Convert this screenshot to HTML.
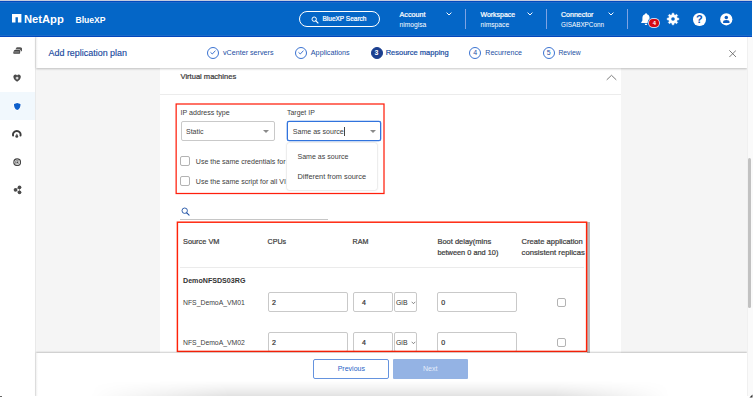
<!DOCTYPE html>
<html lang="en">
<head>
<meta charset="utf-8">
<title>Add replication plan</title>
<style>
*{box-sizing:border-box;margin:0;padding:0}
html,body{width:755px;height:400px;overflow:hidden;background:#fff}
body{font-family:"Liberation Sans",sans-serif;color:#404040;position:relative}
.a{position:absolute}
.t{position:absolute;white-space:nowrap;height:12px;line-height:12px}
.b{font-weight:700}
.sb{-webkit-text-stroke:.22px currentColor}
/* header */
#hdr{left:0;top:1px;width:752.400px;height:36px;background:linear-gradient(to bottom,#0349bf 0,#0349bf 1px,#1a6bc9 1px,#1a6bc9 2px,#0466c7 2px,#0466c7 34px,#1a6bc9 34px,#1a6bc9 35px,#0349bf 35px)}
#topline{left:0;top:0;width:752.400px;height:1px;background:#c4cbde;z-index:9}
#hdr .t{color:#fff}
.vdiv{position:absolute;top:8px;width:1px;height:20px;background:#7fa3e3}
/* sidebar */
#side{left:0;top:37px;width:36px;height:360px;background:#fff;border-right:1px solid #e9e9e9}
#sideact{left:0;top:92px;width:35px;height:28px;background:#f1f8fd}
/* sub header */
#sub{left:36px;top:37px;width:711px;height:31px;background:linear-gradient(to right,#f0f0f0 0,#fff 2px);box-shadow:0 1px 2px rgba(0,0,0,.22);z-index:3}
.stp{color:#1d4fa3}
.circ{position:absolute;width:12px;height:12px;border-radius:50%;border:1px solid #3b73d1;background:#fff;color:#1d4fa3;font-size:7px;line-height:10px;text-align:center}
.circ.fill{background:#1b3f8f;border-color:#1b3f8f;color:#fff;font-weight:700}
/* main */
#main{left:36px;top:68px;width:711px;height:285px;background:#f5f5f5}
#panel{left:160.200px;top:68px;width:460.800px;height:285px;background:#fff}
.red{position:absolute;border:1.400px solid #ff2410;z-index:2;pointer-events:none}
.sel{position:absolute;height:20px;border:1px solid #c9c9c9;border-radius:2px;background:#fff}
.inp{position:absolute;height:20px;border:1px solid #c9c9c9;border-radius:2px;background:#fff}
.cb{position:absolute;border:1px solid #b3b3b3;border-radius:2px;background:#fff}
.tri{position:absolute;width:0;height:0;border-left:3px solid transparent;border-right:3px solid transparent;border-top:3px solid #8a8a8a}
/* footer */
#foot{left:36px;top:353.400px;width:711px;height:43.600px;background:linear-gradient(to right,#f0f0f0 0,#fff 2px);box-shadow:0 -1px 1.500px rgba(0,0,0,.2);z-index:4}
#sbar{left:747px;top:37px;width:6px;height:360px;background:#fafafa;border-left:1px solid #f0f0f0}
#thumb{left:748px;top:158px;width:3px;height:150px;background:#c1c1c1;border-radius:2px}
</style>
</head>
<body>
<div id="topline" class="a"></div>

<!-- ======= HEADER ======= -->
<div id="hdr" class="a">
  <svg class="a" style="left:12px;top:13px" width="10" height="9" viewBox="0 0 10 9"><path d="M0 0H9.4V8.4H5.9V3.2H3.5V8.4H0Z" fill="#fff"/></svg>
  <div class="t b" style="left:24px;top:11.5px;font-size:11.2px">NetApp</div>
  <div class="t b" style="left:75.500px;top:12.700px;font-size:8.600px">BlueXP</div>

  <div class="a" style="left:299px;top:10px;width:81px;height:16px;border:1px solid #fff;border-radius:8px"></div>
  <svg class="a" style="left:311px;top:14.5px" width="8" height="8" viewBox="0 0 8 8"><circle cx="3.2" cy="3.2" r="2.2" fill="none" stroke="#fff" stroke-width="1"/><path d="M4.9 4.9L7 7" stroke="#fff" stroke-width="1.1" stroke-linecap="round"/></svg>
  <div class="t sb" style="left:322.500px;top:12.400px;font-size:6.500px">BlueXP Search</div>

  <div class="t sb" style="left:399.500px;top:7.500px;font-size:7.200px">Account</div>
  <div class="t" style="left:399.5px;top:17.5px;font-size:6.7px">nimogisa</div>
  <svg class="a chev" style="left:446px;top:10.5px" width="6" height="4.300" viewBox="0 0 7 5"><path d="M1 1L3.500 3.500L6 1" fill="none" stroke="#fff" stroke-width="1.150" stroke-linecap="round" stroke-linejoin="round"/></svg>
  <div class="vdiv" style="left:465px"></div>

  <div class="t sb" style="left:480.500px;top:7.500px;font-size:6.950px">Workspace</div>
  <div class="t" style="left:480.5px;top:17.5px;font-size:6.7px">nimspace</div>
  <svg class="a chev" style="left:527px;top:10.5px" width="6" height="4.300" viewBox="0 0 7 5"><path d="M1 1L3.500 3.500L6 1" fill="none" stroke="#fff" stroke-width="1.150" stroke-linecap="round" stroke-linejoin="round"/></svg>
  <div class="vdiv" style="left:546px"></div>

  <div class="t sb" style="left:561px;top:7.500px;font-size:7.040px">Connector</div>
  <div class="t" style="left:561px;top:17.5px;font-size:6.35px">GISABXPConn</div>
  <svg class="a chev" style="left:607.5px;top:10.5px" width="6" height="4.300" viewBox="0 0 7 5"><path d="M1 1L3.500 3.500L6 1" fill="none" stroke="#fff" stroke-width="1.150" stroke-linecap="round" stroke-linejoin="round"/></svg>
  <div class="vdiv" style="left:626.5px"></div>

  <!-- bell -->
  <svg class="a" style="left:641px;top:12px" width="10" height="13" viewBox="0 0 10 13"><path d="M5 0.3C5.6 0.3 6 .7 6 1.2C7.7 1.7 8.6 3.1 8.6 5V7.6L9.8 9.4V10H.2V9.4L1.4 7.6V5C1.4 3.100 2.300 1.700 4 1.200C4 .7 4.400 .3 5 .3ZM3.700 10.700H6.300C6.300 11.500 5.700 12.100 5 12.100C4.300 12.100 3.700 11.500 3.700 10.700Z" fill="#fff"/></svg>
  <div class="a" style="left:649.300px;top:18px;width:10px;height:7.600px;border-radius:3.800px;background:#d60a14;box-shadow:0 0 0 .7px #fff,0 0 0 1.400px #0466c7"></div>
  <div class="t b" style="left:652.700px;top:15.900px;font-size:5.800px;color:#fff">4</div>
  <!-- gear -->
  <svg class="a" style="left:665.500px;top:11.100px" width="14" height="14" viewBox="-7 -7 14 14"><path d="M-1.11 -4.15L-0.77 -5.85L0.77 -5.85L1.11 -4.15L2.15 -3.72L3.59 -4.68L4.68 -3.59L3.72 -2.15L4.15 -1.11L5.85 -0.77L5.85 0.77L4.15 1.11L3.72 2.15L4.68 3.59L3.59 4.68L2.15 3.72L1.11 4.15L0.77 5.85L-0.77 5.85L-1.11 4.15L-2.15 3.72L-3.59 4.68L-4.68 3.59L-3.72 2.15L-4.15 1.11L-5.85 0.77L-5.85 -0.77L-4.15 -1.11L-3.72 -2.15L-4.68 -3.59L-3.59 -4.68L-2.15 -3.72Z" fill="#fff" stroke="#fff" stroke-width=".5" stroke-linejoin="round"/><circle r="1.800" fill="#0466c7"/></svg>
  <!-- help -->
  <div class="a" style="left:693px;top:12.300px;width:12.500px;height:12.500px;border-radius:50%;background:#fff"></div>
  <div class="t b" style="left:695.900px;top:12.200px;font-size:11px;color:#0a55b8">?</div>
  <!-- user -->
  <svg class="a" style="left:720px;top:12.100px" width="12.600" height="12.600" viewBox="0 0 13 13"><circle cx="6.500" cy="6.500" r="6.300" fill="#fff"/><circle cx="6.500" cy="4.700" r="1.800" fill="#0a5cc0"/><path d="M3.200 10.300V9.300C3.200 8 4.300 7.300 6.500 7.300C8.700 7.300 9.800 8 9.800 9.300V10.300Z" fill="#0a5cc0"/></svg>
</div>

<!-- ======= MAIN BG ======= -->
<div id="main" class="a"></div>
<div id="panel" class="a"></div>

<!-- ======= SUB HEADER ======= -->
<div id="sub" class="a">
  <div class="t stp" style="left:12.500px;top:9.500px;font-size:8.950px;color:#1a4aa0;-webkit-text-stroke:.15px #1a4aa0">Add replication plan</div>

  <div class="circ" style="left:171px;top:9.500px"></div>
  <svg class="a" style="left:174px;top:13px" width="6" height="5" viewBox="0 0 6 5"><path d="M.8 2.600L2.300 4L5.200 .9" fill="none" stroke="#2d66c9" stroke-width=".9" stroke-linecap="round" stroke-linejoin="round"/></svg>
  <div class="t stp" style="left:187px;top:9.500px;font-size:7.170px">vCenter servers</div>

  <div class="circ" style="left:258.500px;top:9.500px"></div>
  <svg class="a" style="left:261.500px;top:13px" width="6" height="5" viewBox="0 0 6 5"><path d="M.8 2.600L2.300 4L5.200 .9" fill="none" stroke="#2d66c9" stroke-width=".9" stroke-linecap="round" stroke-linejoin="round"/></svg>
  <div class="t stp" style="left:274.800px;top:9.500px;font-size:7.230px">Applications</div>

  <div class="circ fill" style="left:334.500px;top:9.500px">3</div>
  <div class="t stp sb" style="left:349.700px;top:9.500px;font-size:7.500px">Resource mapping</div>

  <div class="circ" style="left:433.300px;top:9.500px">4</div>
  <div class="t stp" style="left:449.300px;top:9.500px;font-size:7.080px">Recurrence</div>

  <div class="circ" style="left:506.700px;top:9.500px">5</div>
  <div class="t stp" style="left:522.400px;top:9.500px;font-size:6.800px">Review</div>

  <svg class="a" style="left:692.800px;top:13.200px" width="7.400" height="7.400" viewBox="0 0 7.400 7.400"><path d="M.6 .6L6.800 6.800M6.800 .6L.6 6.800" stroke="#666" stroke-width=".85" stroke-linecap="round"/></svg>
</div>

<!-- ======= SIDEBAR ======= -->
<div id="side" class="a"></div>
<div id="sideact" class="a"></div>
<div id="icons" class="a" style="left:0;top:0">
  <!-- 1 storage stack -->
  <svg class="a" style="left:12.600px;top:46.600px" width="9.600" height="7" viewBox="0 0 11 8"><path d="M4.300 .3H8C9.700 .3 10.700 1.500 10.700 2.900C10.700 4.300 9.800 5.200 8.900 5.400V4.600C8.900 3.600 8.200 2.900 7.200 2.900H2.600Z" fill="#555"/><path d="M2.200 3.500H7C7.700 3.500 8.200 4 8.200 4.700V6.500C8.200 7.200 7.700 7.700 7 7.700H1.400C.7 7.700 .2 7.200 .3 6.500L.9 4.500C1.100 3.900 1.500 3.500 2.200 3.500Z" fill="#444"/><path d="M1.300 5.700H7.300" stroke="#fff" stroke-width=".55"/></svg>
  <!-- 2 heart shield -->
  <svg class="a" style="left:12.900px;top:74.100px" width="8.200" height="8" viewBox="0 0 9 9"><path d="M4.500 8.700C2.500 7.400 .3 5.600 .3 3.100C.3 1.600 1.300 .5 2.600 .5C3.400 .5 4.100 .9 4.500 1.600C4.900 .9 5.600 .5 6.400 .5C7.700 .5 8.700 1.600 8.700 3.100C8.700 5.600 6.500 7.400 4.500 8.700Z" fill="#4a4a4a"/><path d="M4.500 3V6.200M2.900 4.600H6.100" stroke="#fff" stroke-width="1.150"/></svg>
  <!-- 3 shield active -->
  <svg class="a" style="left:12.750px;top:101.500px" width="8.500" height="9" viewBox="0 0 8.500 9"><path d="M4.250 1C5.300 1.550 6.400 1.800 7.500 1.900C7.600 4.900 6.700 6.900 4.250 8.100C1.800 6.900 .9 4.900 1 1.900C2.100 1.800 3.200 1.550 4.250 1Z" fill="#0d5fcb" stroke="#fff" stroke-width="1.400" stroke-linejoin="round" paint-order="stroke"/></svg>
  <!-- 4 dome -->
  <svg class="a" style="left:12.300px;top:129.800px" width="9.600" height="8.600" viewBox="0 0 10 9"><path d="M1.100 5.800C.6 3 2.400 1.100 5 1.100C7.600 1.100 9.400 3 8.900 5.800" fill="none" stroke="#3c3c3c" stroke-width="2" stroke-linecap="round"/><circle cx="5" cy="6.700" r="1.500" fill="#444"/><path d="M3.700 5.800L5 3.700L6.300 5.800Z" fill="#666"/></svg>
  <!-- 5 target -->
  <svg class="a" style="left:12.900px;top:157.800px" width="8.400" height="8.400" viewBox="0 0 9 9"><circle cx="4.500" cy="4.500" r="3.600" fill="none" stroke="#444" stroke-width="1.200"/><rect x="2.700" y="2.700" width="3.600" height="3.600" rx=".8" fill="none" stroke="#666" stroke-width=".8"/><rect x="3.700" y="3.700" width="1.600" height="1.600" fill="#333"/></svg>
  <!-- 6 nodes -->
  <svg class="a" style="left:12.500px;top:185px" width="9" height="9.600" viewBox="0 0 9 9.600"><path d="M2.500 4.800L6.500 2.300M2.500 4.800L6.500 7.300M6.500 2.300V7.300" stroke="#777" stroke-width=".7"/><circle cx="2.500" cy="4.800" r="1.850" fill="#4a4a4a"/><circle cx="6.500" cy="2.300" r="1.850" fill="#4a4a4a"/><circle cx="6.500" cy="7.300" r="1.850" fill="#4a4a4a"/></svg>
</div>

<!-- ======= PANEL CONTENT ======= -->
<div id="content" class="a" style="left:0;top:0">
  <div class="t sb" style="left:180.500px;top:70.500px;font-size:7.550px;color:#3a3a3a;-webkit-text-stroke-width:.22px">Virtual machines</div>
  <svg class="a" style="left:606px;top:74px" width="11" height="7" viewBox="0 0 11 7"><path d="M1 5.600L5.500 1.300L10 5.600" fill="none" stroke="#7c7c7c" stroke-width="1" stroke-linecap="round" stroke-linejoin="round"/></svg>
  <div class="a" style="left:160px;top:94px;width:461px;height:1px;background:#ececec"></div>

  <!-- red box 1 -->
  
  <div class="t" style="left:180.500px;top:106.800px;font-size:7.100px">IP address type</div>
  <div class="t" style="left:287px;top:106.800px;font-size:6.950px">Target IP</div>

  <div class="sel" style="left:180.500px;top:121px;width:94.500px"></div>
  <div class="t" style="left:186px;top:125.500px;font-size:7px">Static</div>
  <div class="tri" style="left:263px;top:130px"></div>

  <div class="sel" style="left:286.500px;top:121px;width:94.500px;border-color:#3173dd;box-shadow:0 0 0 .3px #3173dd"></div>
  <div class="t" style="left:292.800px;top:125.500px;font-size:7.060px">Same as source</div>
  <div class="a" style="left:344.200px;top:127px;width:.7px;height:9px;background:#444"></div>
  <div class="tri" style="left:369.500px;top:130px"></div>

  <!-- checkboxes -->
  <div class="cb" style="left:180.200px;top:156.300px;width:10px;height:10px"></div>
  <div class="t" style="left:195.800px;top:155.600px;font-size:7.050px">Use the same credentials for</div>
  <div class="cb" style="left:180.200px;top:176.300px;width:10px;height:10px"></div>
  <div class="t" style="left:195.800px;top:175.600px;font-size:7.050px">Use the same script for all VI</div>

  <!-- dropdown -->
  <div class="a" style="left:287px;top:142.500px;width:90px;height:47.500px;background:#fff;border-radius:2px;box-shadow:0 0 2px rgba(0,0,0,.28)"></div>
  <div class="t" style="left:297.500px;top:150.500px;font-size:7.060px">Same as source</div>
  <div class="t" style="left:297.500px;top:170.500px;font-size:7.370px">Different from source</div>

  <!-- search -->
  <svg class="a" style="left:180.500px;top:206.500px" width="9" height="9" viewBox="0 0 9 9"><circle cx="3.700" cy="3.700" r="2.700" fill="none" stroke="#1d4fa3" stroke-width=".9"/><path d="M5.800 5.800L8.100 8.100" stroke="#1d4fa3" stroke-width="1.050" stroke-linecap="round"/></svg>
  <div class="a" style="left:180px;top:218.500px;width:148px;height:1px;background:#c6c6c6"></div>

  <!-- red box 2 -->
  <div class="a" style="left:587.300px;top:222px;width:2.700px;height:131.500px;background:#b9bbbd"></div>
  

  <div class="t sb" style="left:183px;top:236px;font-size:7.380px">Source VM</div>
  <div class="t sb" style="left:267.600px;top:236px;font-size:7.100px">CPUs</div>
  <div class="t sb" style="left:352.600px;top:236px;font-size:7.100px">RAM</div>
  <div class="t sb" style="left:437.400px;top:236px;font-size:7.500px">Boot delay(mins</div>
  <div class="t sb" style="left:437.400px;top:246.700px;font-size:7.360px">between 0 and 10)</div>
  <div class="t sb" style="left:521.600px;top:236px;font-size:7.600px">Create application</div>
  <div class="t sb" style="left:521.600px;top:246.700px;font-size:7.700px">consistent replicas</div>
  <div class="a" style="left:180px;top:267px;width:403.500px;height:1px;background:#ebebeb"></div>

  <div class="t b" style="left:183px;top:274.700px;font-size:7.120px;color:#333">DemoNFSDS03RG</div>

  <!-- row 1 -->
  <div class="t" style="left:183px;top:296.800px;font-size:6.840px">NFS_DemoA_VM01</div>
  <div class="inp" style="left:267.500px;top:292.300px;width:80px"></div>
  <div class="t sb" style="left:272px;top:296.800px;font-size:7px;color:#333">2</div>
  <div class="inp" style="left:352.500px;top:292.300px;width:40.500px"></div>
  <div class="t sb" style="left:362px;top:296.800px;font-size:7px;color:#333">4</div>
  <div class="inp" style="left:394px;top:292.300px;width:23px"></div>
  <div class="t" style="left:396px;top:296.800px;font-size:6.900px;color:#333">GiB</div>
  <svg class="a" style="left:410.500px;top:301px" width="5" height="4" viewBox="0 0 5 4"><path d="M.7 .8L2.500 2.700L4.300 .8" fill="none" stroke="#555" stroke-width=".7"/></svg>
  <div class="inp" style="left:437.300px;top:292.300px;width:79.500px"></div>
  <div class="t sb" style="left:441.300px;top:296.800px;font-size:7px;color:#333">0</div>
  <div class="cb" style="left:557px;top:298.200px;width:9px;height:8.800px"></div>

  <!-- row 2 -->
  <div class="t" style="left:183px;top:336.600px;font-size:6.840px">NFS_DemoA_VM02</div>
  <div class="inp" style="left:267.500px;top:332.200px;width:80px"></div>
  <div class="t sb" style="left:272px;top:336.600px;font-size:7px;color:#333">2</div>
  <div class="inp" style="left:352.500px;top:332.200px;width:40.500px"></div>
  <div class="t sb" style="left:362px;top:336.600px;font-size:7px;color:#333">4</div>
  <div class="inp" style="left:394px;top:332.200px;width:23px"></div>
  <div class="t" style="left:396px;top:336.600px;font-size:6.900px;color:#333">GiB</div>
  <svg class="a" style="left:410.500px;top:340.800px" width="5" height="4" viewBox="0 0 5 4"><path d="M.7 .8L2.500 2.700L4.300 .8" fill="none" stroke="#555" stroke-width=".7"/></svg>
  <div class="inp" style="left:437.300px;top:332.200px;width:79.500px"></div>
  <div class="t sb" style="left:441.300px;top:336.600px;font-size:7px;color:#333">0</div>
  <div class="cb" style="left:557px;top:338px;width:9px;height:8.800px"></div>
</div>

<svg class="a" style="left:0;top:0;z-index:2;pointer-events:none" width="755" height="400" viewBox="0 0 755 400"><rect x="176.150" y="104" width="207.850" height="89.500" fill="none" stroke="#ff1f0c" stroke-width="1.250"/><rect x="177.400" y="222.200" width="409.200" height="129.200" fill="none" stroke="#ff2208" stroke-width="1.450"/></svg>
<!-- ======= FOOTER ======= -->
<div id="foot" class="a">
  <div class="a" style="left:54px;top:27.600px;width:580px;height:15px;background:linear-gradient(to bottom,rgba(0,0,0,0) 0,rgba(0,0,0,.035) 35%,rgba(0,0,0,.075) 70%,rgba(0,0,0,.115) 100%);-webkit-mask-image:linear-gradient(to right,transparent 0,#000 24%,#000 80%,transparent 100%);mask-image:linear-gradient(to right,transparent 0,#000 24%,#000 80%,transparent 100%)"></div>
  <div class="a" style="left:277.300px;top:5.300px;width:75.700px;height:20px;border:1px solid #6593de;border-radius:2px;background:#fff"></div>
  <div class="t" style="left:301.700px;top:9.300px;font-size:7.020px;color:#2a63c7">Previous</div>
  <div class="a" style="left:356.800px;top:5.300px;width:75.400px;height:20px;border-radius:1px;background:#94b3e4"></div>
  <div class="t" style="left:387px;top:9.300px;font-size:7.050px;color:#e3ecfa">Next</div>
</div>
<div class="a" style="left:0;top:396px;width:755px;height:4px;background:#fff;z-index:6"></div>

<!-- scrollbar -->
<div id="sbar" class="a" style="z-index:5"></div>
<div id="thumb" class="a" style="z-index:6"></div>
<svg class="a" style="left:749px;top:394px;z-index:8" width="4" height="4" viewBox="0 0 4 4"><path d="M3.500 .5V3.500H.5Z" fill="#333"/></svg>
<div class="a" style="left:0;top:395.800px;width:1.600px;height:1.200px;background:#666;z-index:8"></div>
</body>
</html>
